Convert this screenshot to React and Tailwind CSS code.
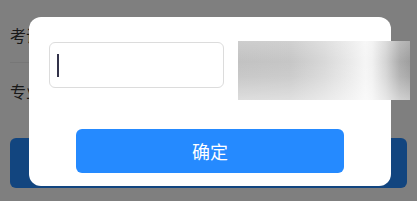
import React from "react";

export default function App() {
  return (
    <div className="relative w-[417px] h-[201px] overflow-hidden bg-white font-['Noto_Sans_CJK_SC','Noto_Sans',sans-serif]">
      {/* underlying page */}
      <div className="flex flex-col pt-[8px]">
        <div className="mx-[10px] h-[55px] flex items-center border-b border-[#eeeeee] text-[16px] text-[#333333]">
          考试名称
        </div>
        <div className="mx-[10px] h-[55px] flex items-center text-[16px] text-[#333333]">
          专业名称
        </div>
        <div className="mx-[10px] mt-[20px] h-[50px] rounded-[6px] bg-[#258aff]"></div>
      </div>

      {/* overlay */}
      <div className="absolute inset-0 bg-black/50"></div>

      {/* modal */}
      <div className="absolute left-[29px] top-[17px] w-[362px] h-[169px] rounded-[12px] bg-white flex flex-col">
        <div className="flex items-start pl-[20px] pt-[24px]">
          <div className="mt-[1px] w-[175px] h-[46px] shrink-0 rounded-[6px] border border-[#dcdcdc] flex items-center pl-[7px]">
            <div className="w-[2px] h-[23px] bg-[#33334a]"></div>
          </div>
          <div className="relative ml-[14px] w-[172px] h-[59px] shrink-0 bg-[linear-gradient(90deg,#c2c2c2_0%,#c6c6c6_30%,#d8d8d8_50%,#e6e6e6_62%,#f5f5f5_74%,#f1f1f1_78%,#d4d4d4_86%,#acacac_94%,#9e9e9e_100%)]">
            <div className="absolute inset-0 bg-[linear-gradient(180deg,rgba(255,255,255,0.18)_0%,rgba(255,255,255,0)_35%,rgba(255,255,255,0.1)_60%,rgba(255,255,255,0.45)_100%)]"></div>
          </div>
        </div>
        <div className="flex justify-center mt-[29px]">
          <button className="w-[268px] h-[44px] rounded-[6px] bg-[#258aff] text-white text-[18px] leading-none flex items-center justify-center">
            确定
          </button>
        </div>
      </div>
    </div>
  );
}
